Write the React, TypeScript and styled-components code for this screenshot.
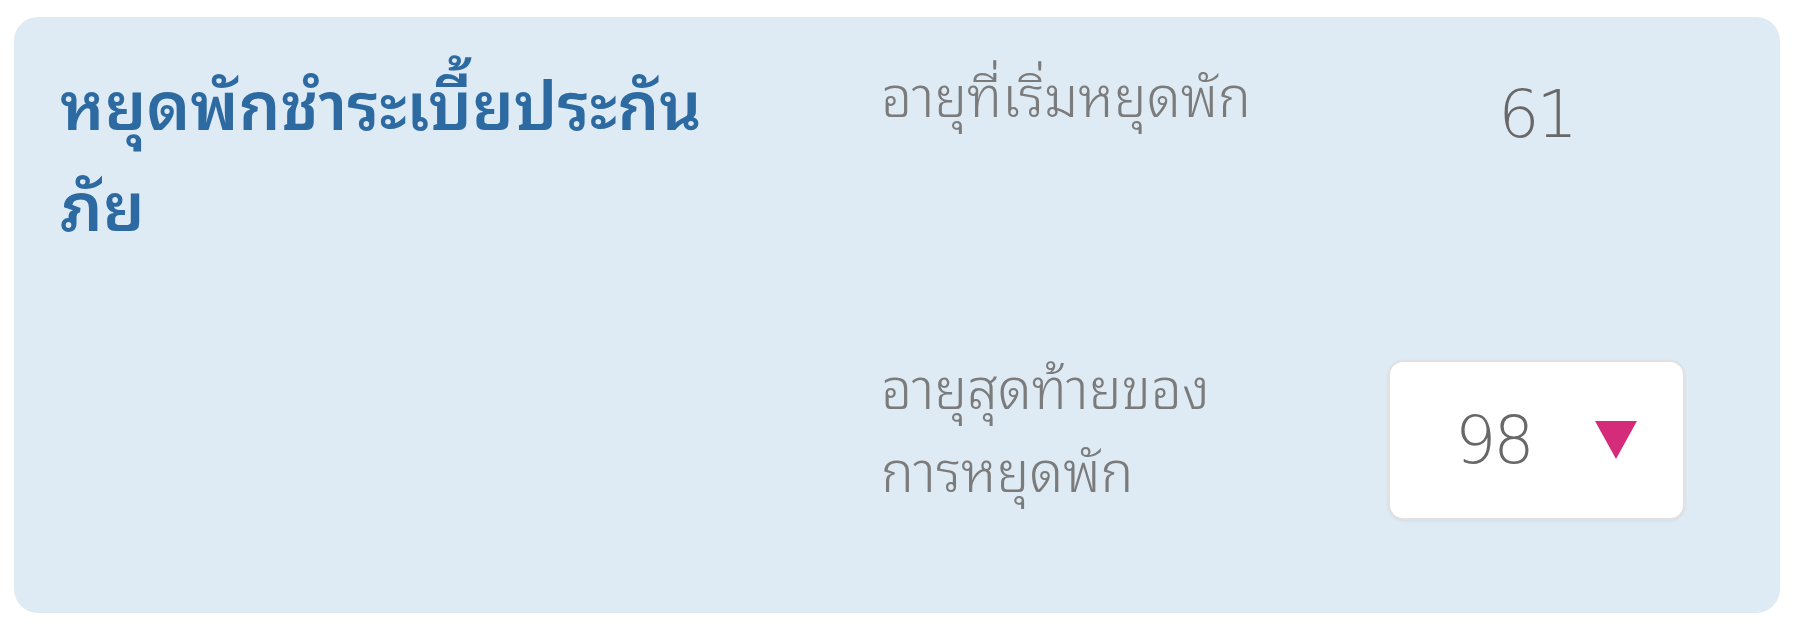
import styled, { createGlobalStyle } from "styled-components";

const GlobalStyle = createGlobalStyle`
  html, body {
    margin: 0;
    padding: 0;
    background: #ffffff;
  }
  body {
    font-family: "Noto Sans Thai Looped", "Noto Sans", sans-serif;
  }
`;

const Page = styled.div`
  padding: 17px 33px 25px 14px;
`;

const Card = styled.section`
  display: grid;
  grid-template-columns: 821px 507px 297px;
  grid-template-rows: 305px 160px;
  align-items: start;
  background: #deebf4;
  border-radius: 24px;
  height: 596px;
  box-sizing: border-box;
  padding: 38px 0 0 46px;
`;

const Title = styled.h2`
  grid-row: 1 / span 2;
  max-width: 720px;
  margin: -5px 0 0;
  font-size: 66px;
  line-height: 101px;
  font-weight: 600;
  color: #2d6aa2;
`;

const Label = styled.div<{ $center?: boolean }>`
  align-self: ${(p) => (p.$center ? "center" : "start")};
  margin-top: ${(p) => (p.$center ? "-28px" : "-4px")};
  font-size: 55px;
  line-height: 83px;
  font-weight: 300;
  color: #7b7b7b;
`;

const Digits = styled.span`
  font-family: "DejaVu Sans", "Open Sans", sans-serif;
  font-size: 65px;
  font-weight: 200;
  letter-spacing: -3px;
  color: #686868;
`;

const Value = styled(Digits)`
  display: block;
  text-align: center;
  line-height: 96px;
  margin-top: 12px;
`;

const Select = styled.div`
  height: 160px;
  box-sizing: border-box;
  display: flex;
  align-items: center;
  padding-left: 65px;
  gap: 63px;
  background: #ffffff;
  border: 2px solid #e1e1e1;
  border-radius: 15px;
  box-shadow: 0 1px 3px rgba(0, 0, 0, 0.06);
`;

const Caret = () => (
  <svg width="42" height="38" viewBox="0 0 42 38">
    <polygon points="0,0 42,0 21,38" fill="#d42c7a" />
  </svg>
);

export default function App() {
  return (
    <>
      <GlobalStyle />
      <Page>
        <Card>
          <Title>หยุดพักชำระเบี้ยประกันภัย</Title>
          <Label>อายุที่เริ่มหยุดพัก</Label>
          <Value>61</Value>
          <Label $center>
            อายุสุดท้ายของ
            <br />
            การหยุดพัก
          </Label>
          <Select>
            <Digits>98</Digits>
            <Caret />
          </Select>
        </Card>
      </Page>
    </>
  );
}
